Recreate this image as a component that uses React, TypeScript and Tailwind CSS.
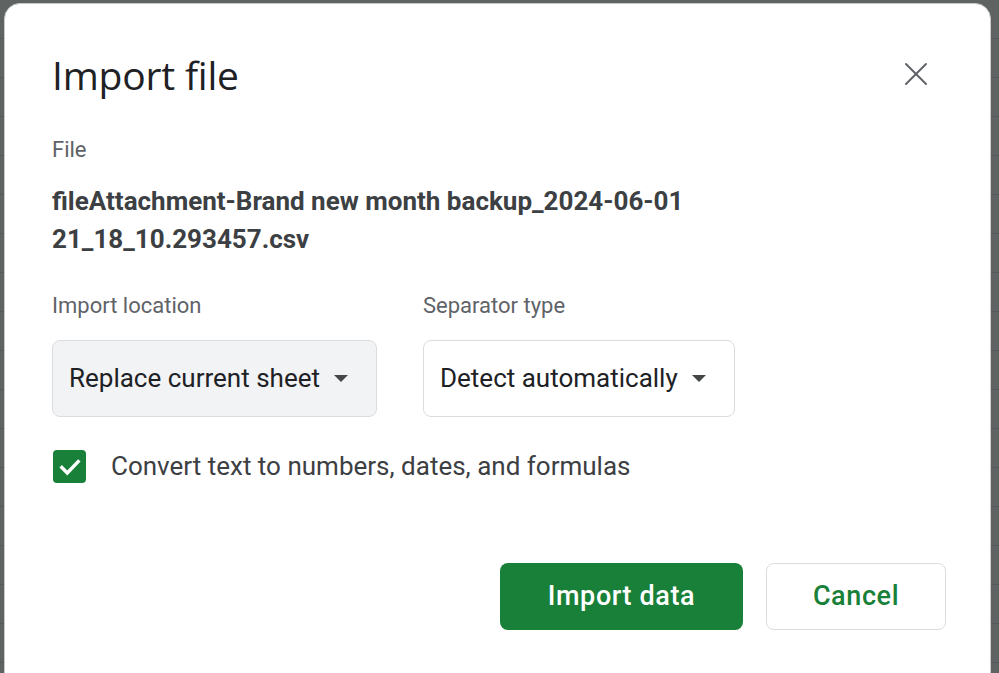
import { X } from 'lucide-react';

export default function App() {
  return (
    <div className="h-[673px] w-[999px] overflow-hidden bg-[#5f6361] bg-[repeating-linear-gradient(to_bottom,transparent_0px,transparent_38px,#54585a_38px,#54585a_39px)] pl-[4px] pr-[8px] pt-[3px]">
      <div className="h-[700px] rounded-[16px] border border-[#c7c9cc] bg-white pl-[47px] pr-[44px] pt-[46px] font-['Roboto',sans-serif]">
        {/* Header */}
        <div className="flex items-start justify-between">
          <h1 className="font-['Open_Sans',sans-serif] text-[39px] leading-[50px] tracking-[-0.2px] text-[#202124]">
            Import file
          </h1>
          <button className="mr-[10px] mt-[4px] text-[#5f6368]">
            <X className="h-[40px] w-[40px]" strokeWidth={1.2} />
          </button>
        </div>

        {/* File */}
        <div className="mt-[37px] text-[22px] leading-[26px] text-[#5f6368]">File</div>
        <div className="mt-[19px] w-[700px] text-[26px] font-bold leading-[38px] text-[#3c4043]">
          fileAttachment-Brand new month backup_2024-06-01 21_18_10.293457.csv
        </div>

        {/* Options */}
        <div className="mt-[35px] flex gap-[46px]">
          <div>
            <div className="text-[22px] leading-[26px] text-[#5f6368]">Import location</div>
            <button className="mt-[21px] flex h-[77px] w-[325px] items-center rounded-[8px] border border-[#dadce0] bg-[#f1f3f4] pl-[16px] text-[26px] text-[#202124]">
              Replace current sheet
              <span className="ml-[14px] h-0 w-0 border-x-[7.5px] border-t-[7px] border-x-transparent border-t-[#444746]" />
            </button>
          </div>
          <div>
            <div className="text-[22px] leading-[26px] text-[#5f6368]">Separator type</div>
            <button className="mt-[21px] flex h-[77px] w-[312px] items-center rounded-[8px] border border-[#dadce0] bg-white pl-[16px] text-[26px] text-[#202124]">
              Detect automatically
              <span className="ml-[14px] h-0 w-0 border-x-[7.5px] border-t-[7px] border-x-transparent border-t-[#444746]" />
            </button>
          </div>
        </div>

        {/* Checkbox */}
        <label className="mt-[30px] flex items-center gap-[25px]">
          <span className="ml-[1px] flex h-[33px] w-[33px] items-center justify-center rounded-[4px] bg-[#188038]">
            <svg viewBox="0 0 24 24" className="h-[26px] w-[26px]" fill="none" stroke="white" strokeWidth={3.2} strokeLinecap="square">
              <path d="M4.5 12.5l5 5L19.5 7" />
            </svg>
          </span>
          <span className="text-[26px] text-[#3c4043]">Convert text to numbers, dates, and formulas</span>
        </label>

        {/* Actions */}
        <div className="mt-[77px] flex justify-end gap-[23px]">
          <button className="h-[67px] w-[243px] rounded-[8px] bg-[#188038] text-[27px] font-medium tracking-[0.6px] text-white">
            Import data
          </button>
          <button className="h-[67px] w-[180px] rounded-[8px] border border-[#dadce0] bg-white text-[27px] font-medium tracking-[0.6px] text-[#188038]">
            Cancel
          </button>
        </div>
      </div>
    </div>
  );
}
